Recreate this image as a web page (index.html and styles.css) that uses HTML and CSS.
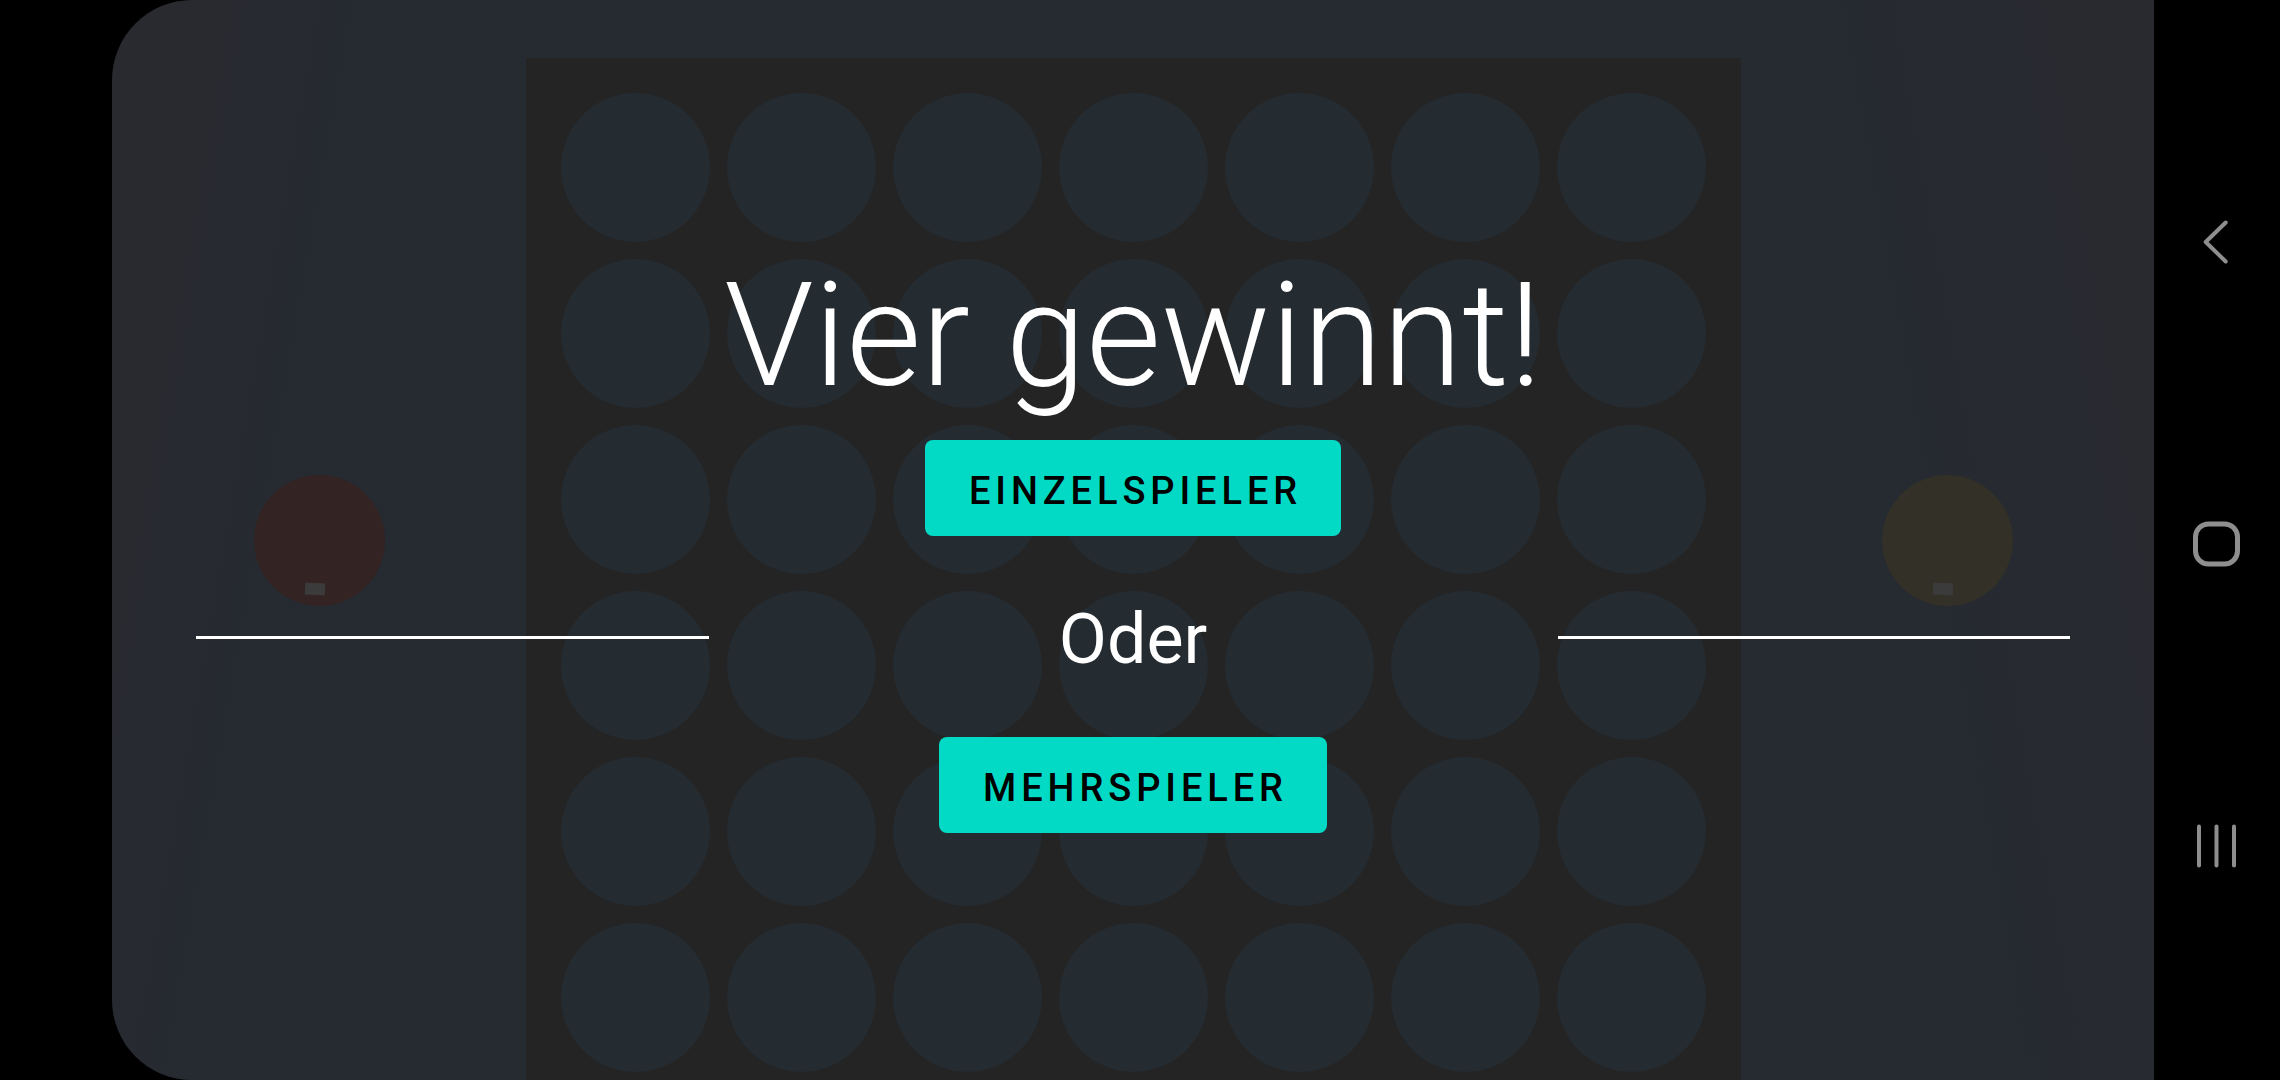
FILE: index.html
```html
<!DOCTYPE html>
<html lang="de">
<head>
<meta charset="utf-8">
<title>Vier gewinnt!</title>
<link rel="stylesheet" href="styles.css">
</head>
<body>
<div class="device">
  <div class="screen">
    <div class="game">
      <div class="side">
        <div class="token token-red"><span class="chip"></span></div>
      </div>
      <div class="board">
        <span class="hole"></span><span class="hole"></span><span class="hole"></span><span class="hole"></span><span class="hole"></span><span class="hole"></span><span class="hole"></span>
        <span class="hole"></span><span class="hole"></span><span class="hole"></span><span class="hole"></span><span class="hole"></span><span class="hole"></span><span class="hole"></span>
        <span class="hole"></span><span class="hole"></span><span class="hole"></span><span class="hole"></span><span class="hole"></span><span class="hole"></span><span class="hole"></span>
        <span class="hole"></span><span class="hole"></span><span class="hole"></span><span class="hole"></span><span class="hole"></span><span class="hole"></span><span class="hole"></span>
        <span class="hole"></span><span class="hole"></span><span class="hole"></span><span class="hole"></span><span class="hole"></span><span class="hole"></span><span class="hole"></span>
        <span class="hole"></span><span class="hole"></span><span class="hole"></span><span class="hole"></span><span class="hole"></span><span class="hole"></span><span class="hole"></span>
      </div>
      <div class="side">
        <div class="token token-yellow"><span class="chip"></span></div>
      </div>
    </div>
    <div class="menu">
      <h1 class="title">Vier gewinnt!</h1>
      <button class="btn btn-single">EINZELSPIELER</button>
      <div class="divider">
        <span class="rule"></span>
        <span class="oder">Oder</span>
        <span class="rule"></span>
      </div>
      <button class="btn btn-multi">MEHRSPIELER</button>
    </div>
  </div>
  <nav class="navbar">
    <svg class="nav-icon" viewBox="0 0 60 60" width="60" height="60">
      <polyline points="38.7,10.5 18.7,30 38.7,49.5" fill="none" stroke="#8e8e8e" stroke-width="4" stroke-linecap="round" stroke-linejoin="round"/>
    </svg>
    <svg class="nav-icon" viewBox="0 0 60 60" width="60" height="60">
      <rect x="8.5" y="10" width="42" height="40" rx="13" ry="13" fill="none" stroke="#8e8e8e" stroke-width="5"/>
    </svg>
    <svg class="nav-icon" viewBox="0 0 60 60" width="60" height="60">
      <line x1="12" y1="10.5" x2="12" y2="49.5" stroke="#8e8e8e" stroke-width="4" stroke-linecap="round"/>
      <line x1="29.5" y1="10.5" x2="29.5" y2="49.5" stroke="#8e8e8e" stroke-width="4" stroke-linecap="round"/>
      <line x1="47" y1="10.5" x2="47" y2="49.5" stroke="#8e8e8e" stroke-width="4" stroke-linecap="round"/>
    </svg>
  </nav>
</div>
</body>
</html>
```

FILE: styles.css
```css
html, body {
  margin: 0;
  padding: 0;
  background: #000;
}

body {
  width: 2280px;
  height: 1080px;
  overflow: hidden;
  font-family: Roboto, "Noto Sans", "Liberation Sans", sans-serif;
}

.device {
  display: flex;
  width: 2280px;
  height: 1080px;
  padding-left: 112px;
  box-sizing: border-box;
  background: #000;
}

.screen {
  position: relative;
  width: 2042px;
  height: 1080px;
  flex: none;
  border-radius: 80px 0 0 80px;
  overflow: hidden;
  background:
    linear-gradient(100deg, rgba(44, 42, 46, 0.55) 0%, rgba(44, 42, 46, 0.35) 5%, rgba(38, 42, 49, 0) 12%),
    linear-gradient(260deg, rgba(44, 42, 46, 0.45) 0%, rgba(44, 42, 46, 0.25) 8%, rgba(38, 42, 49, 0) 16%),
    #262a31;
}

.game {
  display: grid;
  grid-template-columns: 414px 1215px 1fr;
  height: 100%;
}

.side {
  display: flex;
  align-items: center;
  justify-content: center;
}

.token {
  width: 131px;
  height: 131px;
  border-radius: 50%;
  box-sizing: border-box;
  display: flex;
  align-items: flex-end;
  justify-content: center;
  padding-bottom: 11px;
}

.token-red {
  background: #332322;
}

.token-yellow {
  background: #333027;
}

.chip {
  width: 20px;
  height: 12px;
  margin-right: 9px;
  background: #3b3b3b;
  transform: rotate(3deg);
}

.board {
  margin-top: 58px;
  height: 1022px;
  box-sizing: border-box;
  background: #242424;
  padding: 35px;
  display: grid;
  grid-template-columns: repeat(7, 149px);
  grid-auto-rows: 149px;
  gap: 17px;
  align-content: start;
  overflow: hidden;
}

.hole {
  width: 149px;
  height: 149px;
  border-radius: 50%;
  background: #242b31;
}

.menu {
  position: absolute;
  inset: 0;
  display: flex;
  flex-direction: column;
  align-items: center;
  padding-top: 250px;
  box-sizing: border-box;
}

.title {
  margin: 0;
  font-family: Roboto, "Noto Sans", sans-serif;
  font-weight: 300;
  font-size: 145px;
  line-height: 170px;
  color: #fff;
  letter-spacing: 0;
  white-space: nowrap;
}

.btn {
  height: 96px;
  box-sizing: border-box;
  padding: 6px 39px 0 44px;
  border: none;
  border-radius: 8px;
  background: #03dac5;
  color: #000;
  font-family: Roboto, "Noto Sans", sans-serif;
  font-weight: 500;
  font-size: 38px;
  letter-spacing: 4.9px;
  line-height: 90px;
  cursor: pointer;
}

.btn-single {
  margin-top: 20px;
}

.btn-multi {
  margin-top: 57px;
}

.divider {
  align-self: stretch;
  display: grid;
  grid-template-columns: 1fr 849px 1fr;
  align-items: center;
  padding: 0 84px;
  margin-top: 62px;
  height: 82px;
}

.rule {
  height: 3px;
  margin-bottom: 4px;
  background: #fff;
}

.oder {
  text-align: center;
  font-family: Roboto, "Noto Sans", sans-serif;
  font-weight: 400;
  font-size: 70px;
  line-height: 82px;
  color: #fff;
}

.navbar {
  width: 126px;
  flex: none;
  display: flex;
  flex-direction: column;
  align-items: center;
  padding-top: 212px;
  gap: 242px;
  box-sizing: border-box;
  background: #000;
}

.nav-icon {
  display: block;
}
```
